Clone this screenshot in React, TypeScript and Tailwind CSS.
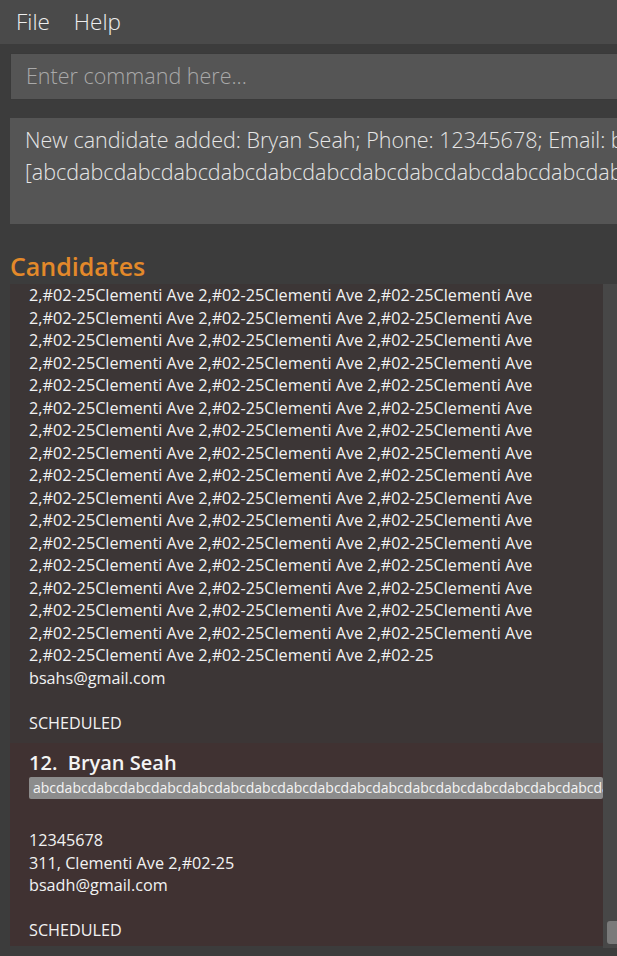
import React from "react";

const FONT = { fontFamily: '"Open Sans", "Noto Sans", sans-serif' };

const addressLine = "2,#02-25Clementi Ave 2,#02-25Clementi Ave 2,#02-25Clementi Ave";

const MenuBar: React.FC = () => (
  <div className="h-[44px] bg-[#4a4a4a] flex items-center gap-[24px] pl-[16px] text-[22.5px] font-light text-[#eeeeee]">
    <span>File</span>
    <span>Help</span>
  </div>
);

const CandidateCard: React.FC<{
  index?: number;
  name?: string;
  tag?: string;
  lines: string[];
  status: string;
  className?: string;
}> = ({ index, name, tag, lines, status, className }) => (
  <div className={"pl-[19px] text-[16.2px] leading-[22.5px] text-[#f2f2f2] " + (className ?? "")}>
    {name && (
      <div className="text-[20px] leading-[24px] font-semibold text-[#f4f4f4]">
        {index}.&nbsp;&nbsp;{name}
      </div>
    )}
    {tag && (
      <div className="mt-[2px] h-[22px] bg-[#8c8c8c] rounded-[2px] px-[4px] text-[14px] leading-[22px] text-[#f4f4f4] whitespace-nowrap overflow-hidden">
        {tag}
      </div>
    )}
    {tag && <div className="h-[30px]" />}
    {lines.map((l, i) => (
      <div key={i} className="whitespace-nowrap">
        {l}
      </div>
    ))}
    <div className="h-[22.5px]" />
    <div>{status}</div>
  </div>
);

export default function App() {
  const firstLines = [
    ...Array.from({ length: 16 }, () => addressLine),
    "2,#02-25Clementi Ave 2,#02-25Clementi Ave 2,#02-25",
    "bsahs@gmail.com",
  ];
  const tag = "abcd".repeat(30);

  return (
    <div className="w-[617px] h-[956px] overflow-hidden bg-[#3c3c3c] flex flex-col" style={FONT}>
      <MenuBar />

      {/* Command box */}
      <div className="pt-[9px] pl-[10px]">
        <div className="w-[640px] h-[47px] bg-[#555555] border border-[#3a3a3a] flex items-center pl-[15px] text-[21.5px] font-light text-[#a9a9a9]">
          Enter command here...
        </div>
      </div>

      {/* Result box */}
      <div className="pt-[18px] pl-[10px]">
        <div className="w-[640px] h-[106px] bg-[#555555] pl-[15px] pt-[6px] text-[21.5px] leading-[32px] font-light text-[#e6e6e6] whitespace-nowrap overflow-hidden">
          <div>New candidate added: Bryan Seah; Phone: 12345678; Email: bsadh@gmail.com</div>
          <div>[{"abcd".repeat(30)}]</div>
        </div>
      </div>

      {/* Candidates heading */}
      <div className="pl-[10px] pt-[24px] h-[60px] text-[25px] leading-[36px] font-semibold text-[#e3892a]">
        Candidates
      </div>

      {/* List panel */}
      <div className="ml-[10px] h-[664px] flex">
        <div className="flex-1 overflow-hidden flex flex-col">
          <CandidateCard
            lines={firstLines}
            status="SCHEDULED"
            className="bg-[#3c3636] pb-[9px]"
          />
          <CandidateCard
            index={12}
            name="Bryan Seah"
            tag={tag}
            lines={["12345678", "311, Clementi Ave 2,#02-25", "bsadh@gmail.com"]}
            status="SCHEDULED"
            className="bg-[#403232] pt-[8px] pb-[4px]"
          />
        </div>
        <div className="w-[14px] bg-[#474747] flex flex-col justify-end pb-[4px] pl-[4px]">
          <div className="h-[23px] bg-[#7a7a7a] rounded-l-[3px]" />
        </div>
      </div>
    </div>
  );
}
